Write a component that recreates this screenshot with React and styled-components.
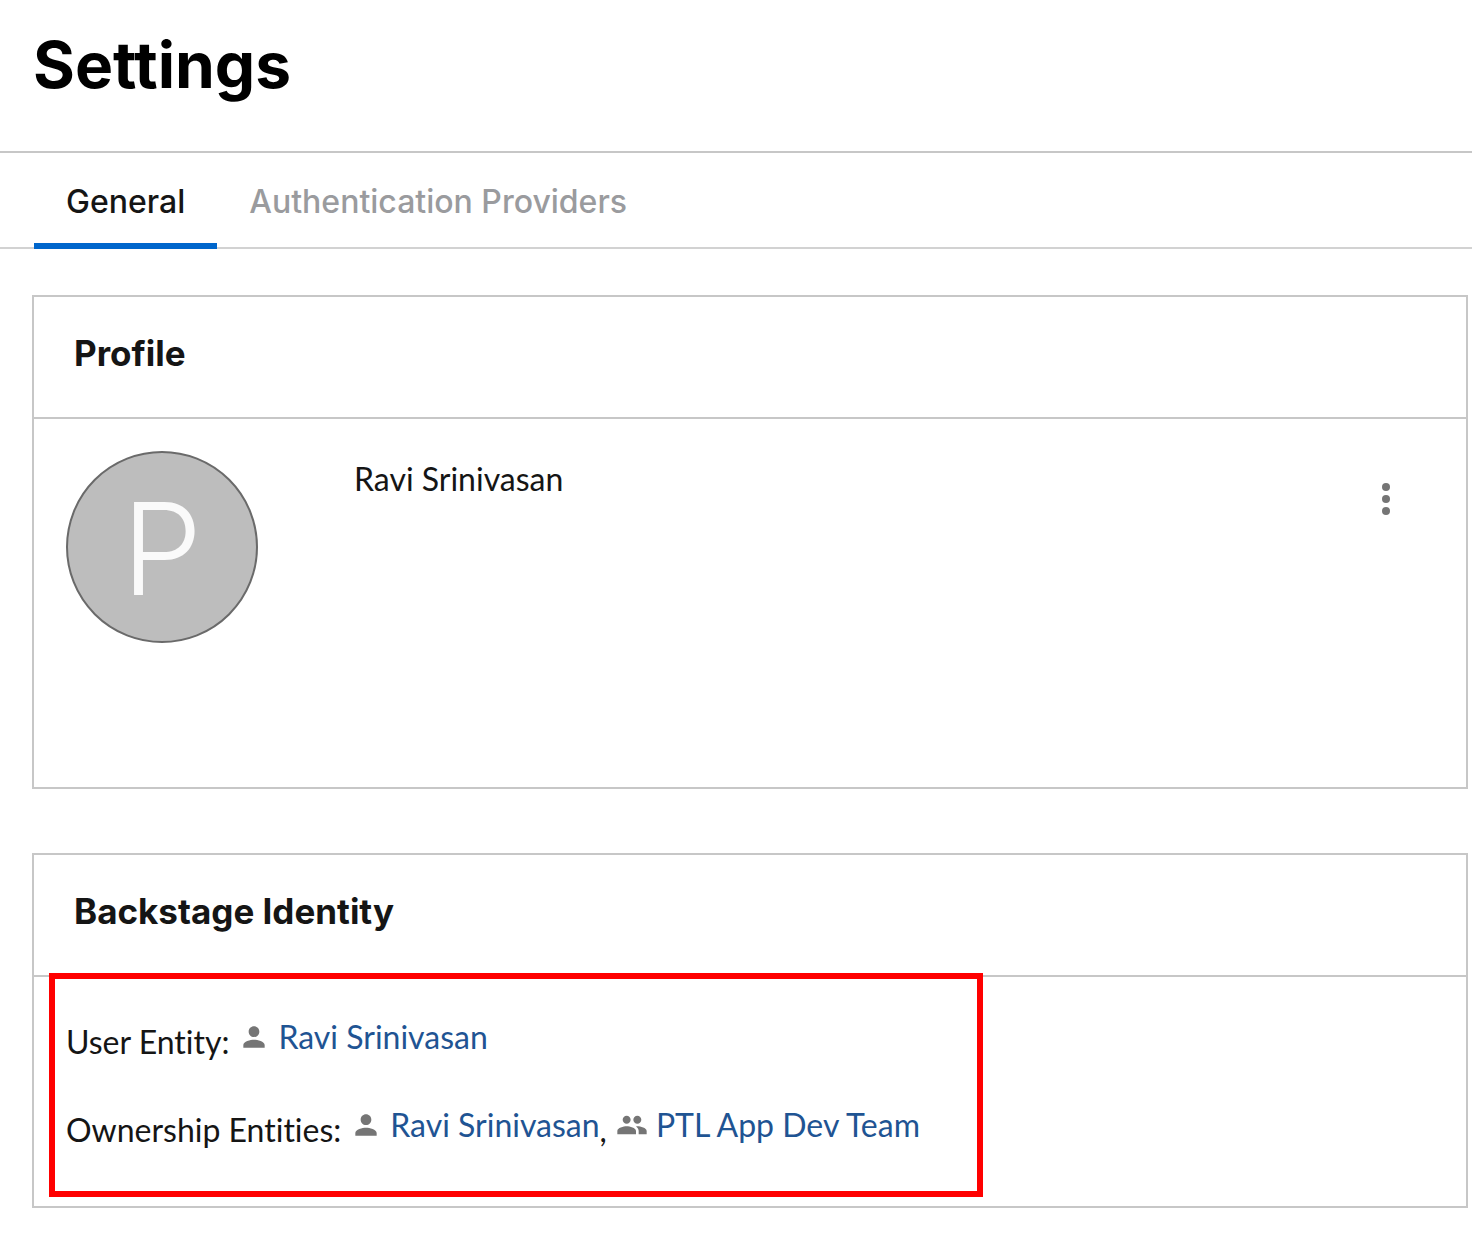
import React from 'react';
import styled, { createGlobalStyle } from 'styled-components';

const Global = createGlobalStyle`
  *, *::before, *::after { box-sizing: border-box; }
  body {
    margin: 0;
    background: #fff;
    color: #151515;
    font-family: Lato, "Liberation Sans", sans-serif;
    font-size: 32px;
    line-height: 48px;
    font-variant-ligatures: none;
  }
`;

const Header = styled.header`
  padding: 31px 33px 52px;
`;

const Title = styled.h1`
  margin: 0;
  font: 700 64px/68px Inter, sans-serif;
  color: #000;
`;

const Tabs = styled.nav`
  display: flex;
  height: 98px;
  padding: 0 34px;
  border-top: 2px solid #c7c7c7;
  border-bottom: 2px solid #d2d2d2;
`;

const Tab = styled.button`
  height: 96px;
  padding: 8px 32px 0;
  border: 0;
  border-bottom: 6px solid ${p => (p.$active ? '#0066cc' : 'transparent')};
  background: none;
  color: ${p => (p.$active ? '#151515' : '#9a9b9e')};
  font: 500 32px/40px Inter, sans-serif;
  cursor: pointer;
`;

const Main = styled.main`
  display: flex;
  flex-direction: column;
  gap: 64px;
  padding: 46px 4px 50px 32px;
`;

const Card = styled.section`
  border: 2px solid #c7c7c7;
`;

const CardTitle = styled.h2`
  margin: 0;
  padding: 32px 40px 40px;
  border-bottom: 2px solid #c7c7c7;
  font: 700 35px/48px Inter, sans-serif;
`;

const ProfileBody = styled.div`
  display: flex;
  align-items: flex-start;
  min-height: 368px;
  padding: 32px 48px 32px 32px;
`;

const Avatar = styled.div`
  display: grid;
  place-items: center;
  flex: none;
  width: 192px;
  height: 192px;
  margin-right: 96px;
  padding-top: 4px;
  border: 2px solid #6a6a6a;
  border-radius: 50%;
  background: #bdbdbd;
  color: #fafafa;
  font: 300 128px/184px Inter, sans-serif;
`;

const Name = styled.p`
  flex: 1;
  margin: 0;
  padding-top: 4px;
`;

const MenuButton = styled.button`
  display: grid;
  place-items: center;
  width: 64px;
  height: 96px;
  padding: 0;
  border: 0;
  background: none;
  cursor: pointer;
`;

const IdentityBody = styled.div`
  padding: 0 15px 9px;
`;

const Highlight = styled.div`
  display: flex;
  flex-direction: column;
  gap: 35px;
  width: fit-content;
  margin-top: -4px;
  padding: 34px 57px 37px 11px;
  border: 6px solid #f00;
`;

const Row = styled.div`
  display: flex;
  align-items: flex-start;
  gap: 9px;
`;

const Label = styled.span`
  padding-top: 5px;
`;

const Item = styled.span`
  display: flex;
`;

const Link = styled.a`
  display: flex;
  align-items: center;
  gap: 8px;
  height: 48px;
  color: #1f5493;
  text-decoration: none;
`;

const Glyph = styled.svg`
  flex: none;
  width: 32px;
  height: 32px;
  fill: #757575;
`;

const PersonIcon = () => (
  <Glyph viewBox="0 0 24 24" aria-hidden="true">
    <path d="M12 12c2.21 0 4-1.79 4-4s-1.79-4-4-4-4 1.79-4 4 1.79 4 4 4zm0 2c-2.67 0-8 1.34-8 4v2h16v-2c0-2.66-5.33-4-8-4z" />
  </Glyph>
);

const GroupIcon = () => (
  <Glyph viewBox="0 0 24 24" aria-hidden="true">
    <path d="M16 11c1.66 0 2.99-1.34 2.99-3S17.66 5 16 5c-1.66 0-3 1.34-3 3s1.34 3 3 3zm-8 0c1.66 0 2.99-1.34 2.99-3S9.66 5 8 5C6.34 5 5 6.34 5 8s1.34 3 3 3zm0 2c-2.33 0-7 1.17-7 3.5V19h14v-2.5c0-2.33-4.67-3.5-7-3.5zm8 0c-.29 0-.62.02-.97.05 1.16.84 1.97 1.97 1.97 3.45V19h6v-2.5c0-2.33-4.67-3.5-7-3.5z" />
  </Glyph>
);

const MoreIcon = () => (
  <svg width="8" height="32" fill="#757575" aria-hidden="true">
    <circle cx="4" cy="4" r="4" />
    <circle cx="4" cy="16" r="4" />
    <circle cx="4" cy="28" r="4" />
  </svg>
);

export default function App() {
  return (
    <>
      <Global />
      <Header>
        <Title>Settings</Title>
      </Header>
      <Tabs>
        <Tab type="button" $active>General</Tab>
        <Tab type="button">Authentication Providers</Tab>
      </Tabs>
      <Main>
        <Card>
          <CardTitle>Profile</CardTitle>
          <ProfileBody>
            <Avatar>P</Avatar>
            <Name>Ravi Srinivasan</Name>
            <MenuButton type="button" aria-label="More">
              <MoreIcon />
            </MenuButton>
          </ProfileBody>
        </Card>
        <Card>
          <CardTitle>Backstage Identity</CardTitle>
          <IdentityBody>
            <Highlight>
              <Row>
                <Label>User Entity:</Label>
                <Link href="#user"><PersonIcon />Ravi Srinivasan</Link>
              </Row>
              <Row>
                <Label>Ownership Entities:</Label>
                <Item>
                  <Link href="#user"><PersonIcon />Ravi Srinivasan</Link>
                  <Label>,</Label>
                </Item>
                <Link href="#team"><GroupIcon />PTL App Dev Team</Link>
              </Row>
            </Highlight>
          </IdentityBody>
        </Card>
      </Main>
    </>
  );
}
